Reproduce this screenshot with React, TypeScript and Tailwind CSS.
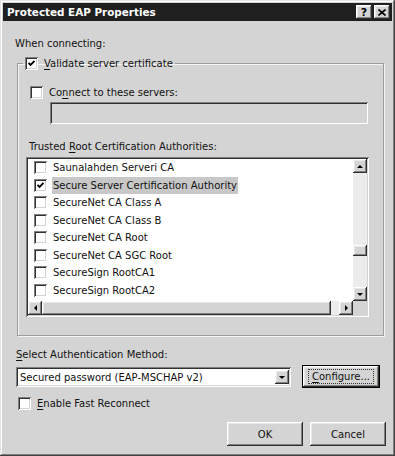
import React from "react";

const raised =
  "bg-[#d4d4d4] shadow-[inset_-1px_-1px_0_#303030,inset_1px_1px_0_#ffffff,inset_-2px_-2px_0_#808080,inset_2px_2px_0_#e8e8e8]";
const sunken =
  "shadow-[inset_1px_1px_0_#808080,inset_-1px_-1px_0_#ffffff,inset_2px_2px_0_#303030,inset_-2px_-2px_0_#d4d4d4]";

function Check({ checked }: { checked?: boolean }) {
  return (
    <span
      className={`w-[13px] h-[13px] bg-white shrink-0 flex items-center justify-center ${sunken}`}
    >
      {checked && (
        <svg width="7" height="7" viewBox="0 0 7 7">
          <path d="M0.5 3 L2.5 5 L6.5 1" stroke="#000" strokeWidth="1.8" fill="none" />
        </svg>
      )}
    </span>
  );
}

function Arrow({ dir }: { dir: "up" | "down" | "left" | "right" }) {
  const pts = {
    up: "1,4 4,1 7,4",
    down: "1,1 4,4 7,1",
    left: "4,1 1,4 4,7",
    right: "1,1 4,4 1,7",
  }[dir];
  const w = dir === "up" || dir === "down" ? 8 : 5;
  const h = dir === "up" || dir === "down" ? 5 : 8;
  return (
    <span className={`w-[14px] h-[14px] flex items-center justify-center shrink-0 ${raised}`}>
      <svg width={w} height={h} viewBox={`0 0 ${w} ${h}`}>
        <polygon points={pts} fill="#000" />
      </svg>
    </span>
  );
}

function U({ children }: { children: React.ReactNode }) {
  return <span className="underline underline-offset-2">{children}</span>;
}

const items = [
  "Saunalahden Serveri CA",
  "Secure Server Certification Authority",
  "SecureNet CA Class A",
  "SecureNet CA Class B",
  "SecureNet CA Root",
  "SecureNet CA SGC Root",
  "SecureSign RootCA1",
  "SecureSign RootCA2",
  "",
];

export default function App() {
  return (
    <div
      className="w-[395px] h-[456px] bg-[#d4d4d4] text-[#111] text-[10px] leading-[13px] font-['Tahoma','DejaVu_Sans',sans-serif] p-[3px] flex flex-col shadow-[inset_-1px_-1px_0_#404040,inset_1px_1px_0_#e4e4e4,inset_-2px_-2px_0_#808080,inset_2px_2px_0_#ffffff] overflow-hidden"
    >
      {/* title bar */}
      <div className="h-[18px] bg-[#1f1f1f] flex items-center justify-between pl-[4px] pr-[2px] shrink-0">
        <span className="text-white font-bold text-[10.4px] font-['DejaVu_Sans',sans-serif]">
          Protected EAP Properties
        </span>
        <div className="flex gap-[2px]">
          <span className={`w-[16px] h-[14px] flex items-center justify-center font-bold text-[11px] text-black ${raised}`}>
            ?
          </span>
          <span className={`w-[16px] h-[14px] flex items-center justify-center ${raised}`}>
            <svg width="8" height="7" viewBox="0 0 8 7">
              <path d="M0.5 0.5 L7.5 6.5 M7.5 0.5 L0.5 6.5" stroke="#000" strokeWidth="1.6" />
            </svg>
          </span>
        </div>
      </div>

      <div className="pl-[12px] flex flex-col">
        <p className="mt-[16px] h-[13px]">When connecting:</p>

        <fieldset className="mt-[7px] ml-[2px] w-[367px] h-[279px] border border-[#9c9c9c] shadow-[1px_1px_0_#f4f4f4,inset_1px_1px_0_#f4f4f4]">
          <legend className="ml-[5px] px-[2px] flex items-center gap-[6px] h-[13px]">
            <Check checked />
            <span>
              <U>V</U>alidate server certificate
            </span>
          </legend>

          <div className="mt-[16px] ml-[12px] flex items-center gap-[6px] h-[13px]">
            <Check />
            <span>
              Co<U>n</U>nect to these servers:
            </span>
          </div>
          <div className={`mt-[3px] ml-[32px] w-[318px] h-[22px] bg-[#d4d4d4] ${sunken}`} />

          <p className="mt-[16px] ml-[11px] h-[13px]">
            Trusted <U>R</U>oot Certification Authorities:
          </p>

          <div className={`mt-[4px] ml-[8px] w-[343px] h-[160px] bg-white p-[2px] flex flex-col ${sunken}`}>
            <div className="flex flex-1 min-h-0">
              <div className="flex-1 overflow-hidden">
                <div>
                  {items.map((t, i) => (
                    <div key={i} className="h-[17.5px] flex items-center pl-[6px] gap-[5px]">
                      <Check checked={i === 1} />
                      {t && (
                        <span className={`px-[1px] h-[17px] flex items-center ${i === 1 ? "bg-[#c8c8c8]" : ""}`}>
                          {t}
                        </span>
                      )}
                    </div>
                  ))}
                </div>
              </div>
              <div className="w-[14px] flex flex-col bg-[#ececec]">
                <Arrow dir="up" />
                <div className="flex-1 flex flex-col">
                  <div className="h-[72px]" />
                  <div className={`h-[11px] ${raised}`} />
                </div>
                <Arrow dir="down" />
              </div>
            </div>
            <div className="h-[14px] flex bg-[#ececec]">
              <Arrow dir="left" />
              <div className={`w-[289px] ${raised}`} />
              <div className="flex-1" />
              <Arrow dir="right" />
              <div className="w-[14px] bg-[#d4d4d4]" />
            </div>
          </div>
        </fieldset>

        <p className="mt-[12px] ml-[1px] h-[13px]">
          <U>S</U>elect Authentication Method:
        </p>

        <div className="mt-[4px] flex items-start">
          <div className={`mt-[2px] ml-[1px] w-[275px] h-[20px] bg-white p-[2px] flex items-center ${sunken}`}>
            <span className="flex-1 pl-[2px]">Secured password (EAP-MSCHAP v2)</span>
            <Arrow dir="down" />
          </div>
          <div className="ml-[11px] w-[78px] h-[23px] border border-black">
            <div className={`w-full h-full flex items-center justify-center ${raised}`}>
              <span className="border border-dotted border-[#333] px-[3px] leading-[13px]">
                <U>C</U>onfigure...
              </span>
            </div>
          </div>
        </div>

        <div className="mt-[9px] ml-[3px] flex items-center gap-[6px] h-[13px]">
          <Check />
          <span>
            <U>E</U>nable Fast Reconnect
          </span>
        </div>

        <div className="mt-[12px] pr-[6px] flex justify-end gap-[7px]">
          <button className={`w-[76px] h-[24px] ${raised}`}>OK</button>
          <button className={`w-[76px] h-[24px] ${raised}`}>Cancel</button>
        </div>
      </div>
    </div>
  );
}
